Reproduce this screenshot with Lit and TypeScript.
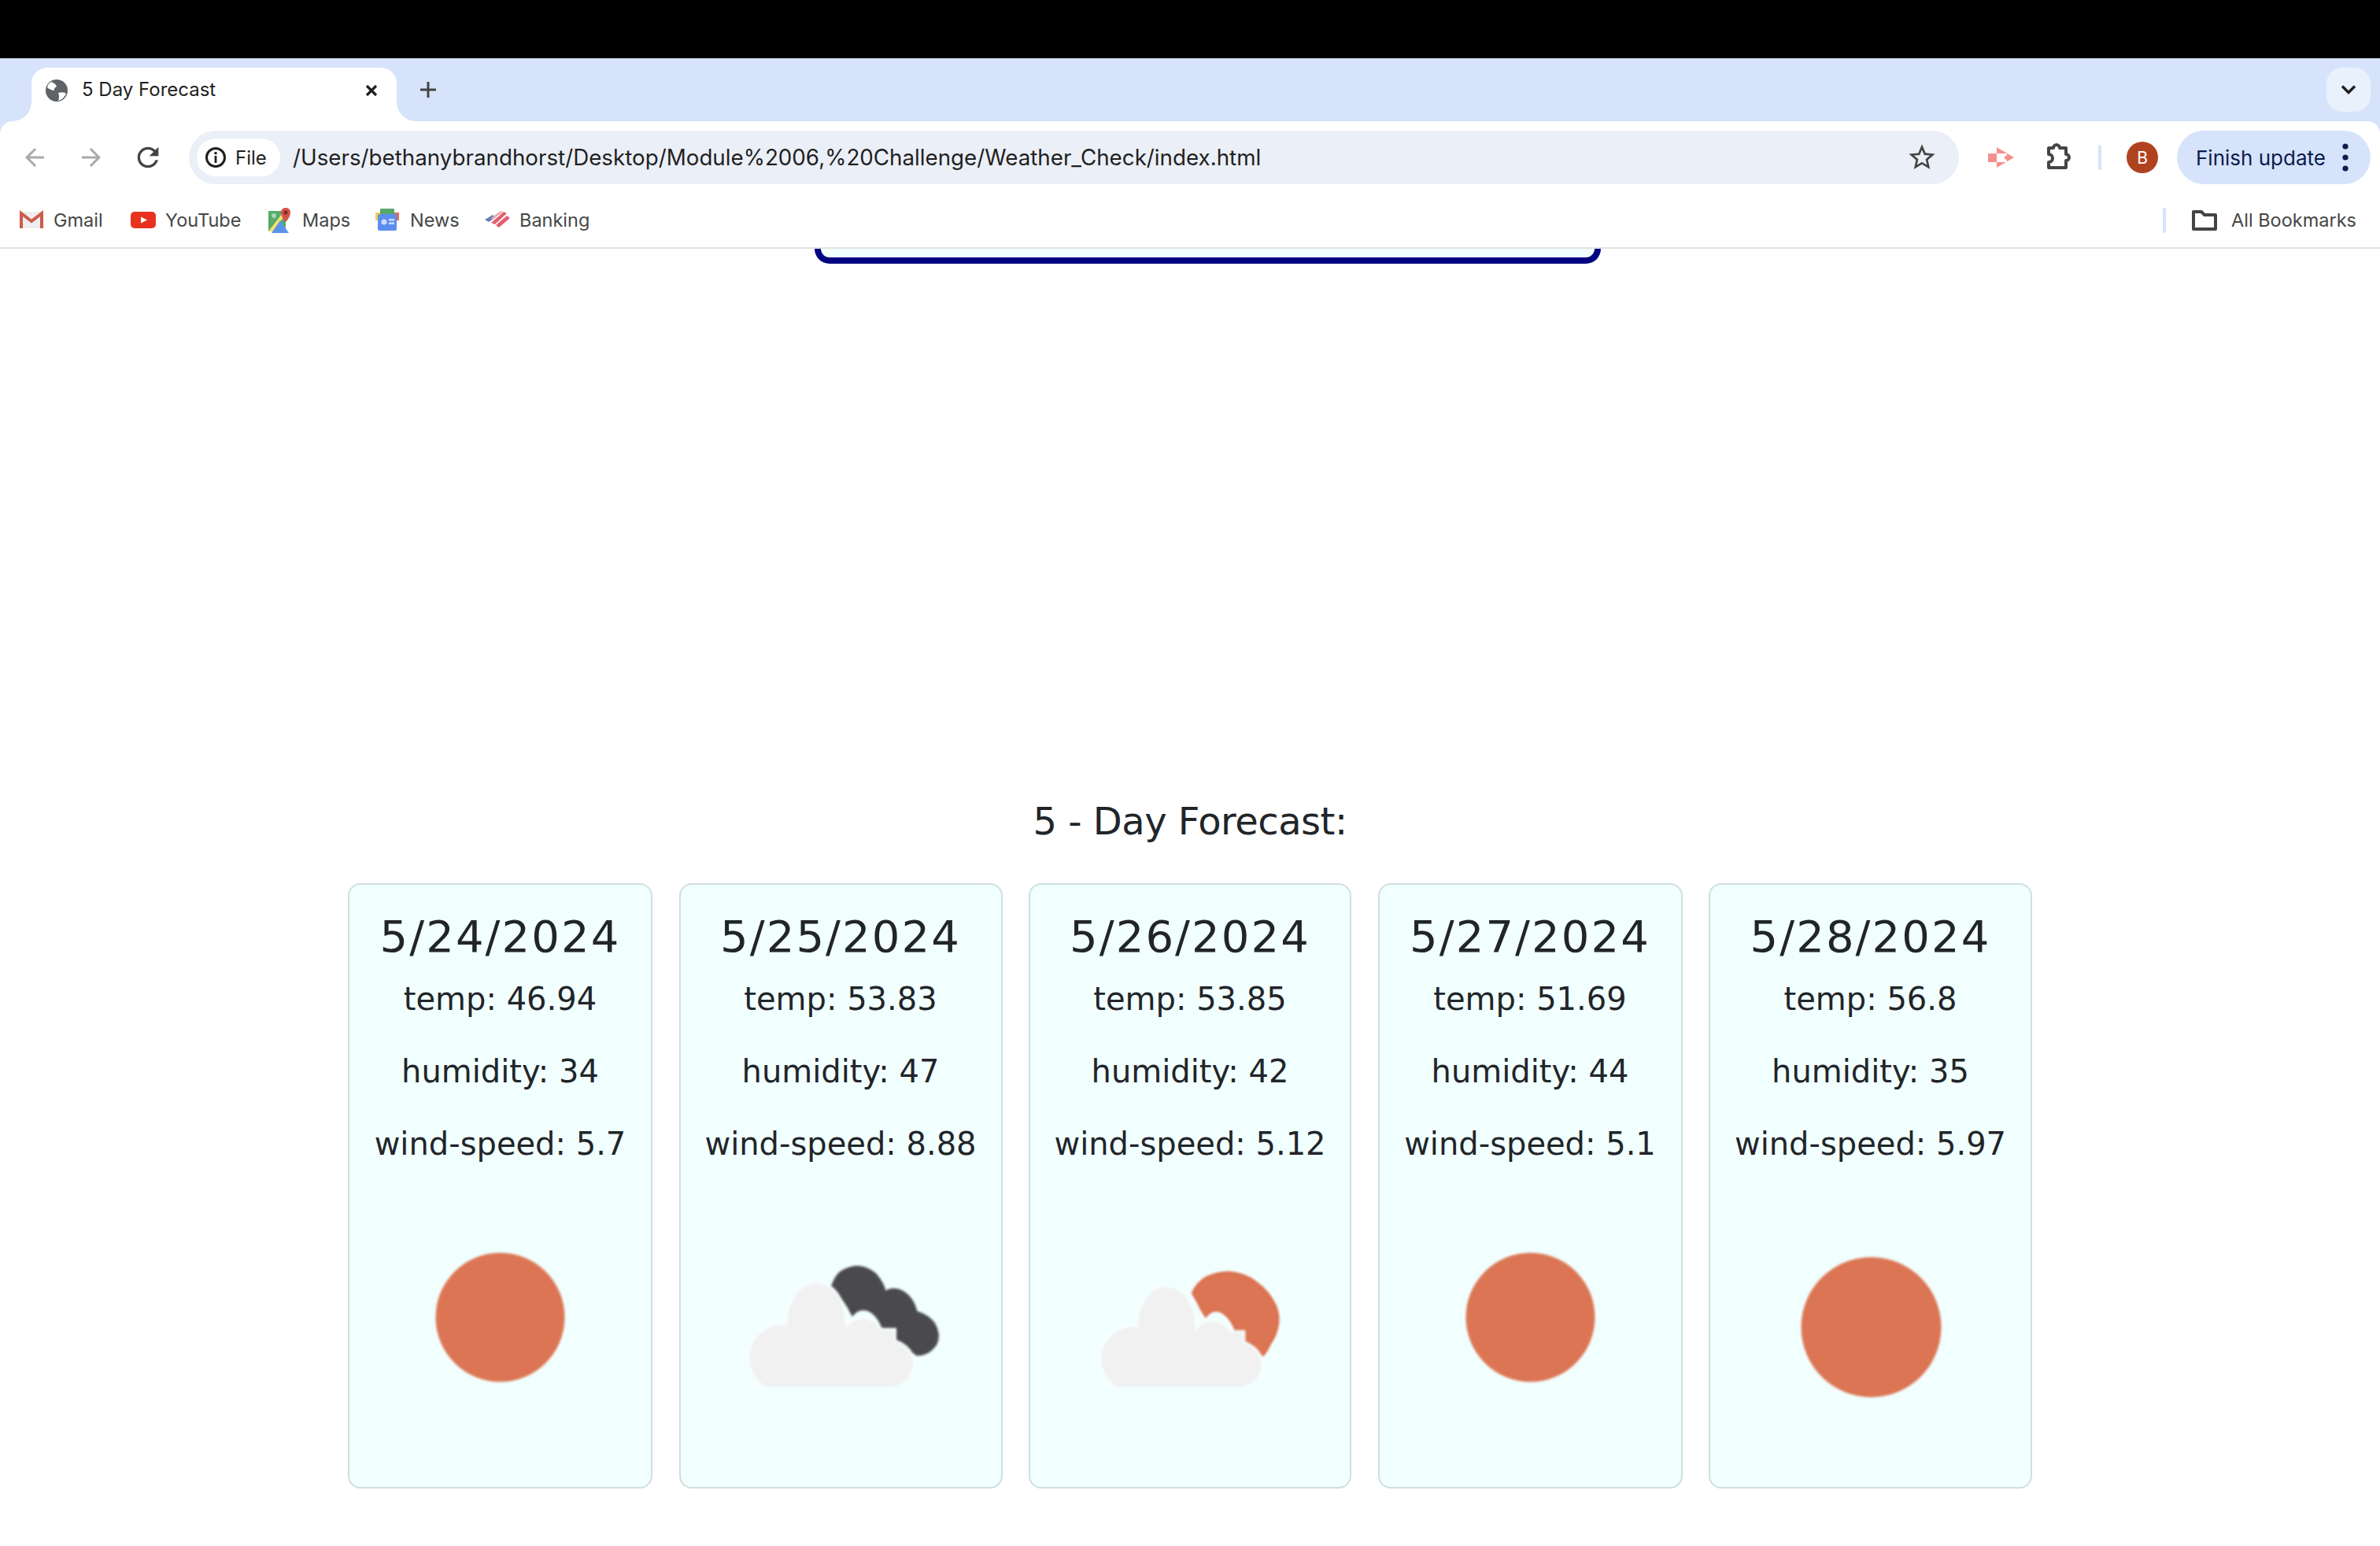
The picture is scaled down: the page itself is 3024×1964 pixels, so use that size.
import { LitElement, html, css, svg } from "lit";
import { customElement } from "lit/decorators.js";

const lumps = svg`
    <ellipse cx="992" cy="1725" rx="41" ry="42"/>
    <ellipse cx="1036" cy="1682" rx="37" ry="52"/>
    <ellipse cx="1095" cy="1710" rx="28" ry="35"/>
    <ellipse cx="1125" cy="1733" rx="34" ry="30"/>
    <rect x="985" y="1690" width="150" height="72"/>`;

const cloud = svg`
  <g fill="#f7ffff" stroke="#f7ffff" stroke-width="6">${lumps}</g>
  <g fill="#f1f1f1">${lumps}</g>`;

const cloudClip = svg`<clipPath id="cc"><rect x="900" y="1500" width="400" height="262"/></clipPath>`;

const sun = (cx: number, cy: number, r: number) =>
  svg`<circle cx=${cx} cy=${cy} r=${r} fill="#db7553"/>`;

const days = [
  { date: "5/24/2024", temp: "46.94", hum: "34", wind: "5.7", width: 387, center: 636,
    art: sun(635.5, 1673.5, 82) },
  { date: "5/25/2024", temp: "53.83", hum: "47", wind: "8.88", width: 411, center: 1067,
    art: svg`${cloudClip}
      <path fill="#4a4a4d" stroke="#4a4a4d" stroke-width="1" stroke-linejoin="round"
        d="M1055 1635 Q1060 1621 1066 1616 Q1090 1600 1112 1618 Q1122 1630 1124 1640 Q1134 1634 1146 1640 Q1160 1648 1164 1666 Q1178 1670 1186 1680 Q1195 1695 1189 1708 Q1180 1722 1164 1722 Q1154 1716 1148 1708 Q1138 1700 1123 1700 Q1122 1688 1115 1677 Q1106 1664 1096 1664 Q1088 1664 1082 1672 Q1076 1660 1071 1653 Z"/>
      <g clip-path="url(#cc)">${cloud}</g>` },
  { date: "5/26/2024", temp: "53.85", hum: "42", wind: "5.12", width: 410, center: 1512,
    art: svg`${cloudClip}
      <path fill="#db7553" stroke="#d9663f" stroke-width="2" stroke-linejoin="round"
        d="M1515 1643 Q1520 1630 1532 1623 Q1546 1616 1562 1616 Q1582 1618 1595 1628 Q1612 1640 1620 1657 Q1626 1670 1624 1682 Q1622 1696 1614 1707 Q1610 1716 1605 1722 Q1600 1716 1592 1710 Q1582 1704 1573 1703 Q1571 1690 1565 1680 Q1556 1666 1546 1665 Q1537 1665 1532 1673 Q1526 1664 1521 1653 Z"/>
      <g clip-path="url(#cc)" transform="translate(1403 1762) scale(0.98 0.962) translate(-955 -1762)">${cloud}</g>` },
  { date: "5/27/2024", temp: "51.69", hum: "44", wind: "5.1", width: 387, center: 1944,
    art: sun(1944.5, 1673.5, 82) },
  { date: "5/28/2024", temp: "56.8", hum: "35", wind: "5.97", width: 411, center: 2376,
    art: sun(2376.5, 1686, 89) },
];

const bookmarks = [
  { label: "Gmail", width: 142, icon: svg`
      <rect x="1" y="1" width="30" height="21" fill="#eeeeee"/>
      <path d="M3 22V3L16 13 29 3V22" fill="none" stroke="#cf5a4c" stroke-width="4"/>` },
  { label: "YouTube", width: 174, icon: svg`
      <rect x="0" y="1" width="32" height="21" rx="5" fill="#e8321f"/>
      <path d="M13 7.5 21 11.5 13 15.5Z" fill="#fff"/>` },
  { label: "Maps", width: 137, icon: svg`
      <path d="M1 0 H23 V26 H1Z" fill="#58ab6b"/>
      <path d="M1 26 21 0 H26 L7 26Z" fill="#f3e36c"/>
      <path d="M5 28 16 12 27 28Z" fill="#5a94e8"/>
      <path d="M23 -4 C15 -4 15 6 23 14 C31 6 31 -4 23 -4Z" fill="#d6534a"/>
      <circle cx="23" cy="2" r="2.5" fill="#7f2a28"/>
      <circle cx="8" cy="6" r="3" fill="#a9d8b4"/>` },
  { label: "News", width: 139, icon: svg`
      <rect x="6" y="-3" width="18" height="8" rx="1" fill="#58a868"/>
      <rect x="0" y="2" width="6" height="10" fill="#f6ce55"/>
      <rect x="24" y="2" width="6" height="10" fill="#e0695c"/>
      <rect x="3" y="4" width="24" height="21" rx="2" fill="#5c8df0"/>
      <circle cx="11" cy="14" r="3.5" fill="#cfdcfb"/>
      <rect x="17" y="10" width="7" height="2.5" fill="#cfdcfb"/>
      <rect x="17" y="14.5" width="7" height="2.5" fill="#cfdcfb"/>` },
  { label: "Banking", width: 150, icon: svg`
      <path d="M0 11 L10 5 L14 8 L5 14Z" fill="#6a7fb4"/>
      <path d="M8 15 L24 1 L28 3 L13 17Z" fill="#e2606f"/>
      <path d="M14 18 L28 6 L32 9 L18 21Z" fill="#e2606f"/>
      <path d="M20 0 L23 1 L10 11 L8 9Z" fill="#eaa6ae"/>` },
];

@customElement("app-root")
export class AppRoot extends LitElement {
  static styles = css`
    :host { display: block; width: 3024px; height: 1964px; overflow: hidden; background: #fff; font-family: Inter, "Liberation Sans", sans-serif; }
    .black { height: 74px; background: #000; }
    .chrome { background: #d6e3fb; }
    .strip { height: 80px; display: flex; align-items: flex-end; padding-left: 40px; }
    .tab { position: relative; width: 464px; height: 68px; box-sizing: border-box; background: #fff; border-radius: 20px 20px 0 0; display: flex; align-items: flex-start; padding: 14px 24px 0 17px; font-size: 24px; color: #1f1f1f; }
    .tab::before, .tab::after { content: ""; position: absolute; bottom: 0; width: 24px; height: 24px; }
    .tab::before { left: -24px; background: radial-gradient(circle at 0 0, transparent 23.5px, #fff 24px); }
    .tab::after { right: -24px; background: radial-gradient(circle at 100% 0, transparent 23.5px, #fff 24px); }
    .fav { display: block; flex: none; }
    .tab-title { margin-left: 17px; flex: 1; line-height: 28px; }
    .tab-close { display: block; }
    .new-tab { align-self: flex-start; margin: 28px 0 0 28px; display: block; }
    .spacer { flex: 1; }
    .drop { align-self: flex-start; width: 56px; height: 56px; margin: 12px 12px 0 0; border-radius: 20px; background: #e9f1fd; display: flex; align-items: center; justify-content: center; }
    .toolbar { height: 96px; background: #fff; border-radius: 16px 16px 0 0; display: flex; align-items: center; padding: 0 12px 4px 24px; box-sizing: border-box; }
    .toolbar > * { flex: none; }
    .nav { width: 40px; height: 40px; margin-right: 32px; display: flex; align-items: center; justify-content: center; }
    .omni { width: 2249px; height: 68px; border-radius: 34px; background: #ebeff7; display: flex; align-items: center; box-sizing: border-box; padding: 0 27px 0 10px; }
    .chip { width: 106px; height: 48px; border-radius: 24px; background: #fff; display: flex; align-items: center; box-sizing: border-box; padding-left: 10px; font-size: 24px; color: #1f1f1f; }
    .chip span { margin-left: 11px; }
    .url { flex: 1; margin-left: 16px; font-size: 27.75px; color: #1f1f1f; white-space: nowrap; }
    .star { display: block; flex: none; }
    .pink { margin-left: 37px; display: block; }
    .puzzle { margin-left: 36px; display: block; }
    .sep { width: 4px; height: 32px; border-radius: 2px; background: #d6e3fb; }
    .sep.a { margin-left: 30px; }
    .avatar { width: 40px; height: 40px; margin-left: 32px; border-radius: 50%; background: #b0431f; color: #fff; display: flex; align-items: center; justify-content: center; font-size: 21px; }
    .update { width: 246px; height: 68px; margin-left: 24px; border-radius: 34px; background: #d6e3fb; color: #0b1d4b; display: flex; align-items: center; box-sizing: border-box; padding-left: 24px; font-size: 26px; white-space: nowrap; }
    .update span { flex: 1; }
    .update svg { display: block; margin-right: 28px; }
    .bars { height: 64px; background: #fff; display: flex; align-items: center; box-sizing: border-box; padding: 0 30px 5px 24px; font-size: 23.5px; color: #444746; }
    .bm { display: flex; align-items: center; gap: 12px; }
    .bm svg { display: block; overflow: visible; filter: blur(.6px); flex: none; }
    .sep.b { margin-right: 32px; margin-left: auto; }
    .all { display: flex; align-items: center; gap: 17px; }
    .folder { display: block; }
    .divider { height: 2px; background: #e1e3e1; }
    .page-stub { height: 19px; width: 999px; margin-left: 1035px; box-sizing: border-box; background: #f2ffff; border: 8px solid #000080; border-top: 0; border-radius: 0 0 20px 20px; }
    h2 { margin: 679px 0 0; font: 400 48px/58px "DejaVu Sans", Verdana, sans-serif; color: #212529; text-align: center; letter-spacing: -.5px; }
    .row { display: flex; justify-content: center; gap: 33.5px; margin-top: 50px; }
    .card { box-sizing: border-box; height: 769px; border: 2px solid #cfdfe0; border-radius: 16px; background: #f2ffff; padding-top: 32px; text-align: center; color: #212529; font-family: "DejaVu Sans", Verdana, sans-serif; }
    .card h3 { margin: 0 0 16px; font-weight: 400; font-size: 56px; line-height: 67px; letter-spacing: 2.1px; }
    .card p { margin: 0 0 32px; font-size: 40px; line-height: 60px; white-space: nowrap; }
    .card svg { display: block; margin: 0 auto; filter: blur(1.5px); overflow: visible; }
  `;

  render() {
    return html`
      <div class="black"></div>
      <div class="chrome">
        <div class="strip">
          <div class="tab">
            <svg class="fav" width="30" height="30" viewBox="0 0 30 30">
              <circle cx="15" cy="15" r="14" fill="#5f6368"/>
              <path d="M8 4 Q14 6 15 10 Q11 12 12 15 Q6 14 3 11 Q4 6 8 4Z M17 18 Q24 16 27 19 Q24 26 17 28 Q19 23 17 18Z" fill="#fff"/>
            </svg>
            <div class="tab-title">5 Day Forecast</div>
            <svg class="tab-close" width="16" height="30" viewBox="0 0 16 30"><path d="M2 9 14 21M14 9 2 21" stroke="#1f1f1f" stroke-width="3.2" fill="none"/></svg>
          </div>
          <svg class="new-tab" width="24" height="24" viewBox="0 0 24 24"><path d="M12 2V22M2 12H22" stroke="#444" stroke-width="3" fill="none"/></svg>
          <div class="spacer"></div>
          <div class="drop"><svg width="20" height="14" viewBox="0 0 20 14"><path d="M2 2.5 10 10.5 18 2.5" stroke="#1f1f1f" stroke-width="3.4" fill="none"/></svg></div>
        </div>
        <div class="toolbar">
          <div class="nav"><svg width="36" height="36" viewBox="0 0 24 24" fill="#aaa"><path d="M20 11H7.83l5.59-5.59L12 4l-8 8 8 8 1.41-1.41L7.83 13H20v-2z"/></svg></div>
          <div class="nav"><svg width="36" height="36" viewBox="0 0 24 24" fill="#aaa"><path d="M4 11h12.17l-5.59-5.59L12 4l8 8-8 8-1.41-1.41L16.17 13H4v-2z"/></svg></div>
          <div class="nav"><svg width="40" height="40" viewBox="0 0 24 24" fill="#444"><path d="M17.65 6.35C16.2 4.9 14.21 4 12 4c-4.42 0-7.99 3.58-7.99 8s3.57 8 7.99 8c3.73 0 6.84-2.55 7.73-6h-2.08c-.82 2.33-3.04 4-5.65 4-3.31 0-6-2.69-6-6s2.69-6 6-6c1.66 0 3.14.69 4.22 1.78L13 11h7V4l-2.35 2.35z"/></svg></div>
          <div class="omni">
            <div class="chip">
              <svg width="28" height="28" viewBox="0 0 28 28"><circle cx="14" cy="14" r="11.5" fill="none" stroke="#1f1f1f" stroke-width="3"/><rect x="12.6" y="12" width="2.8" height="9" fill="#1f1f1f"/><circle cx="14" cy="8.6" r="1.8" fill="#1f1f1f"/></svg>
              <span>File</span>
            </div>
            <div class="url">/Users/bethanybrandhorst/Desktop/Module%2006,%20Challenge/Weather_Check/index.html</div>
            <svg class="star" width="40" height="40" viewBox="0 0 24 24" fill="#444"><path d="M22 9.24l-7.19-.62L12 2 9.19 8.63 2 9.24l5.46 4.73L5.82 21 12 17.27 18.18 21l-1.63-7.03L22 9.24zM12 15.4l-3.76 2.27 1-4.28-3.32-2.88 4.38-.38L12 6.1l1.71 4.04 4.38.38-3.32 2.88 1 4.28L12 15.4z"/></svg>
          </div>
          <svg class="pink" width="34" height="28" viewBox="0 0 34 28">
            <path d="M0 9H11V20H0Z M11 1 33 14 11 27Z" fill="#f48f8f"/>
            <path d="M11 9H24V11L20 14 24 18V20H11Z" fill="#fff"/>
          </svg>
          <svg class="puzzle" width="40" height="40" viewBox="0 0 40 40"><path d="M7 8H13a4 4 0 0 1 8 0H29V16a4 4 0 0 1 0 8V33H7V26a5 5 0 0 0 0-10Z" fill="none" stroke="#444" stroke-width="4" stroke-linejoin="round"/></svg>
          <div class="sep a"></div>
          <div class="avatar">B</div>
          <div class="update">
            <span>Finish update</span>
            <svg width="8" height="36" viewBox="0 0 8 36" fill="#0b1d4b"><circle cx="4" cy="4" r="3.6"/><circle cx="4" cy="18" r="3.6"/><circle cx="4" cy="32" r="3.6"/></svg>
          </div>
        </div>
      </div>
      <div class="bars">
        ${bookmarks.map(
          (b) => html`<div class="bm" style="width:${b.width}px">
            <svg width="32" height="24" viewBox="0 0 32 24">${b.icon}</svg><span>${b.label}</span>
          </div>`
        )}
        <div class="sep b"></div>
        <div class="all">
          <svg class="folder" width="34" height="28" viewBox="0 0 34 28"><path d="M3 3H13L17 7H31V25H3Z" fill="none" stroke="#444" stroke-width="4" stroke-linejoin="round"/></svg>
          <span>All Bookmarks</span>
        </div>
      </div>
      <div class="divider"></div>
      <div class="page-stub"></div>
      <h2>5 - Day Forecast:</h2>
      <div class="row">
        ${days.map(
          (d) => html`<div class="card" style="width:${d.width}px">
            <h3>${d.date}</h3>
            <p>temp: ${d.temp}</p>
            <p>humidity: ${d.hum}</p>
            <p>wind-speed: ${d.wind}</p>
            <svg width="320" height="341" viewBox="${d.center - 160} 1515 320 341">${d.art}</svg>
          </div>`
        )}
      </div>
    `;
  }
}
